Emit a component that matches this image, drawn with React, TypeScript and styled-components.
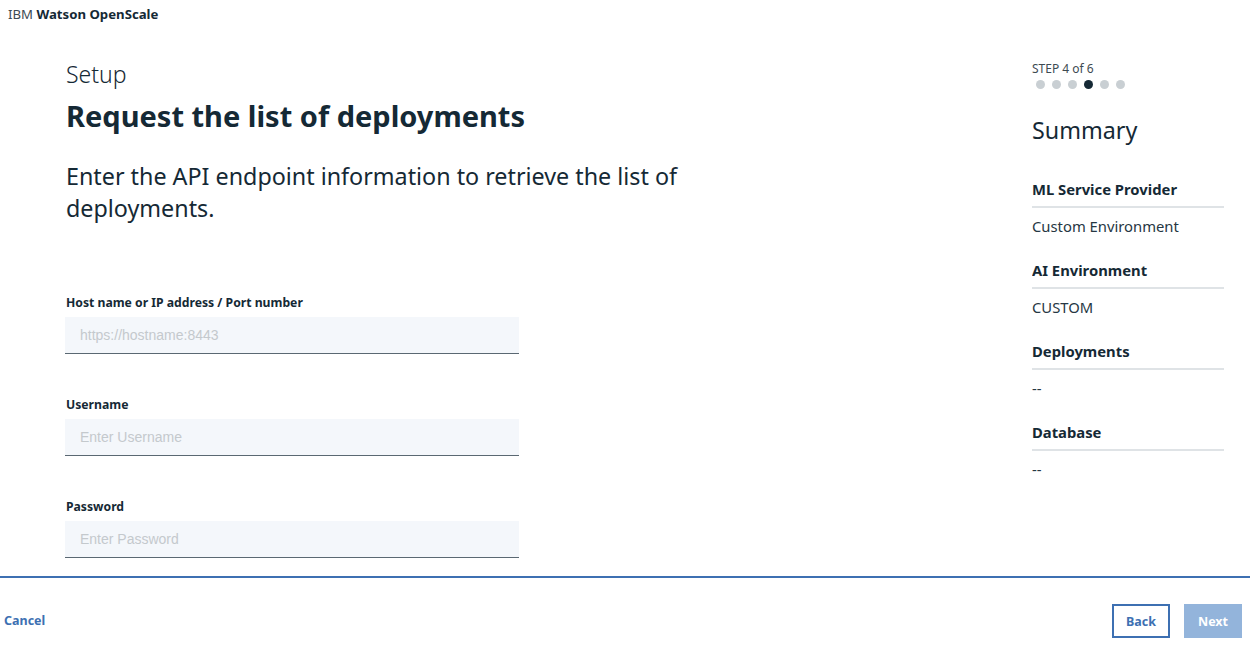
import React from "react";
import styled, { createGlobalStyle } from "styled-components";

const GlobalStyle = createGlobalStyle`
  html, body {
    margin: 0;
    padding: 0;
    background: #fff;
    font-family: "Noto Sans", "Open Sans", sans-serif;
    color: #152935;
  }
`;

const Page = styled.div`
  width: 1250px;
  height: 650px;
  display: flex;
  flex-direction: column;
  overflow: hidden;
`;

const Header = styled.div`
  height: 30px;
  padding: 5px 0 0 8px;
  box-sizing: border-box;
  font-size: 13.2px;
  line-height: 18px;
  span {
    font-weight: 400;
    color: #3d4a52;
  }
  b {
    font-weight: 700;
  }
`;

const Body = styled.div`
  flex: 1;
  display: flex;
  min-height: 0;
`;

const Main = styled.div`
  flex: 1;
  padding: 28px 0 0 66px;
`;

const Eyebrow = styled.div`
  font-size: 23px;
  font-weight: 300;
  line-height: 32px;
`;

const Title = styled.h1`
  margin: 6px 0 0;
  font-size: 29px;
  font-weight: 700;
  line-height: 40px;
`;

const Lead = styled.p`
  margin: 24px 0 0;
  width: 650px;
  font-size: 23.3px;
  font-weight: 400;
  line-height: 32px;
`;

const Form = styled.div`
  margin-top: 71px;
  display: flex;
  flex-direction: column;
  gap: 43px;
`;

const Field = styled.div`
  display: flex;
  flex-direction: column;
  gap: 6px;
`;

const Label = styled.label`
  font-size: 12.2px;
  font-weight: 700;
  line-height: 16px;
`;

const Input = styled.input`
  width: 454px;
  height: 37px;
  box-sizing: border-box;
  margin-left: -1px;
  border: none;
  border-bottom: 1px solid #5a6872;
  background: #f4f7fb;
  padding: 0 15px;
  font-family: "Liberation Sans", Arial, sans-serif;
  font-size: 14px;
  color: #152935;
  outline: none;
  &::placeholder {
    color: #c4c9cd;
  }
`;

const Side = styled.div`
  width: 218px;
  padding: 31px 0 0 0;
  display: flex;
  flex-direction: column;
`;

const StepLabel = styled.div`
  font-size: 12px;
  line-height: 16px;
  color: #3d4a52;
`;

const Dots = styled.div`
  display: flex;
  gap: 7px;
  margin: 3px 0 0 4px;
`;

const Dot = styled.span<{ $active?: boolean }>`
  width: 9px;
  height: 9px;
  border-radius: 50%;
  background: ${(p) => (p.$active ? "#152935" : "#c9cfd3")};
`;

const SummaryTitle = styled.h2`
  margin: 25px 0 0;
  font-size: 23.3px;
  font-weight: 400;
  line-height: 32px;
`;

const SummaryList = styled.div`
  margin-top: 33px;
  height: 298px;
  overflow: hidden;
  width: 192px;
  display: flex;
  flex-direction: column;
  gap: 24px;
`;

const SummaryItem = styled.div`
  display: flex;
  flex-direction: column;
`;

const SummaryHead = styled.div`
  font-size: 14.8px;
  font-weight: 700;
  line-height: 20px;
  padding-bottom: 7px;
  border-bottom: 2px solid #dfe3e6;
`;

const SummaryValue = styled.div`
  font-size: 14.8px;
  line-height: 20px;
  padding-top: 8px;
  color: #263743;
`;

const Footer = styled.div`
  height: 72px;
  border-top: 2px solid #3d70b2;
  display: flex;
  align-items: center;
  justify-content: space-between;
  padding: 0 8px 0 4px;
`;

const LinkButton = styled.button`
  background: none;
  border: none;
  padding: 0;
  margin-top: 12px;
  font-family: "Noto Sans", sans-serif;
  font-size: 12.5px;
  font-weight: 700;
  color: #3d70b2;
`;

const Actions = styled.div`
  display: flex;
  gap: 14px;
  margin-top: 14px;
`;

const Button = styled.button<{ $kind: "secondary" | "primary" }>`
  height: 34px;
  box-sizing: border-box;
  padding: 0 12px;
  font-family: "Noto Sans", sans-serif;
  font-size: 12.5px;
  font-weight: 700;
  border: 2px solid
    ${(p) => (p.$kind === "primary" ? "transparent" : "#3d70b2")};
  background: ${(p) => (p.$kind === "primary" ? "#93b4db" : "#fff")};
  color: ${(p) => (p.$kind === "primary" ? "#fff" : "#3d70b2")};
`;

const fields = [
  { label: "Host name or IP address / Port number", placeholder: "https://hostname:8443" },
  { label: "Username", placeholder: "Enter Username" },
  { label: "Password", placeholder: "Enter Password" },
];

const summary = [
  { head: "ML Service Provider", value: "Custom Environment" },
  { head: "AI Environment", value: "CUSTOM" },
  { head: "Deployments", value: "--" },
  { head: "Database", value: "--" },
];

export default function App() {
  return (
    <Page>
      <GlobalStyle />
      <Header>
        <span>IBM</span> <b>Watson OpenScale</b>
      </Header>
      <Body>
        <Main>
          <Eyebrow>Setup</Eyebrow>
          <Title>Request the list of deployments</Title>
          <Lead>
            Enter the API endpoint information to retrieve the list of
            deployments.
          </Lead>
          <Form>
            {fields.map((f) => (
              <Field key={f.label}>
                <Label>{f.label}</Label>
                <Input
                  placeholder={f.placeholder}
                  type={f.label === "Password" ? "password" : "text"}
                />
              </Field>
            ))}
          </Form>
        </Main>
        <Side>
          <StepLabel>STEP 4 of 6</StepLabel>
          <Dots>
            {[1, 2, 3, 4, 5, 6].map((n) => (
              <Dot key={n} $active={n === 4} />
            ))}
          </Dots>
          <SummaryTitle>Summary</SummaryTitle>
          <SummaryList>
            {summary.map((s) => (
              <SummaryItem key={s.head}>
                <SummaryHead>{s.head}</SummaryHead>
                <SummaryValue>{s.value}</SummaryValue>
              </SummaryItem>
            ))}
          </SummaryList>
        </Side>
      </Body>
      <Footer>
        <LinkButton>Cancel</LinkButton>
        <Actions>
          <Button $kind="secondary">Back</Button>
          <Button $kind="primary">Next</Button>
        </Actions>
      </Footer>
    </Page>
  );
}
